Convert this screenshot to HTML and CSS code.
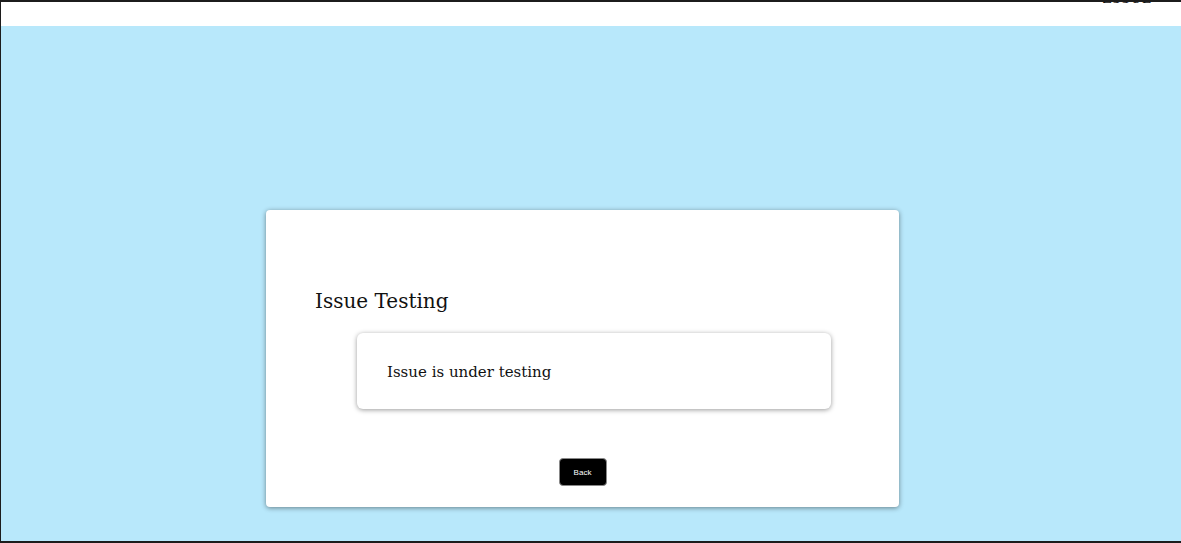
FILE: index.html
```html
<!DOCTYPE html>
<html>
<head>
<meta charset="utf-8">
<link rel="stylesheet" href="styles.css">
</head>
<body>
<div class="frame">
  <header class="topbar">
    <span class="topbar-label">ZSSUE</span>
  </header>
  <main class="stage">
    <section class="card">
      <h2 class="card-title">Issue Testing</h2>
      <div class="message">
        <p class="message-text">Issue is under testing</p>
      </div>
      <div class="actions">
        <button class="btn-back">Back</button>
      </div>
    </section>
  </main>
</div>
</body>
</html>
```
FILE: styles.css
```css
html, body {
  margin: 0;
  padding: 0;
  height: 100%;
  overflow: hidden;
  background: #1c1c1c;
}
.frame {
  box-sizing: border-box;
  height: 543px;
  border-top: 2px solid #1c1c1c;
  border-left: 1px solid #1c1c1c;
  border-bottom: 2px solid #1c1c1c;
  display: flex;
  flex-direction: column;
  font-family: "DejaVu Serif", serif;
  color: #111;
}
.topbar {
  height: 24px;
  background: #fff;
  display: flex;
  justify-content: flex-end;
  overflow: hidden;
  padding-right: 29px;
}
.topbar-label {
  font-size: 13px;
  line-height: 14px;
  margin-top: -10px;
  letter-spacing: 0.5px;
}
.stage {
  flex: 1;
  background: #b8e8fb;
  padding: 184px 0 0 265px;
}
.card {
  box-sizing: border-box;
  width: 633px;
  height: 297px;
  background: #fff;
  border-radius: 4px;
  box-shadow: 0 1px 5px rgba(0,0,0,0.45);
  padding: 79px 0 0 49px;
  display: flex;
  flex-direction: column;
}
.card-title {
  margin: 0;
  font-size: 20px;
  font-weight: normal;
  line-height: 24px;
}
.message {
  box-sizing: border-box;
  width: 474px;
  height: 76px;
  margin: 20px 0 0 42px;
  border-radius: 6px;
  box-shadow: 0 1px 5px rgba(0,0,0,0.4);
  display: flex;
  align-items: center;
  padding: 1px 0 0 30px;
}
.message-text {
  margin: 0;
  font-size: 15px;
}
.actions {
  margin: 49px 0 0 -49px;
  width: 633px;
  display: flex;
  justify-content: center;
}
.btn-back {
  width: 48px;
  height: 28px;
  background: #000;
  color: #ffffff;
  border: 1px solid #888;
  border-radius: 4px;
  font-family: "Liberation Sans", Arial, sans-serif;
  font-size: 8px;
  padding: 0;
}
```
